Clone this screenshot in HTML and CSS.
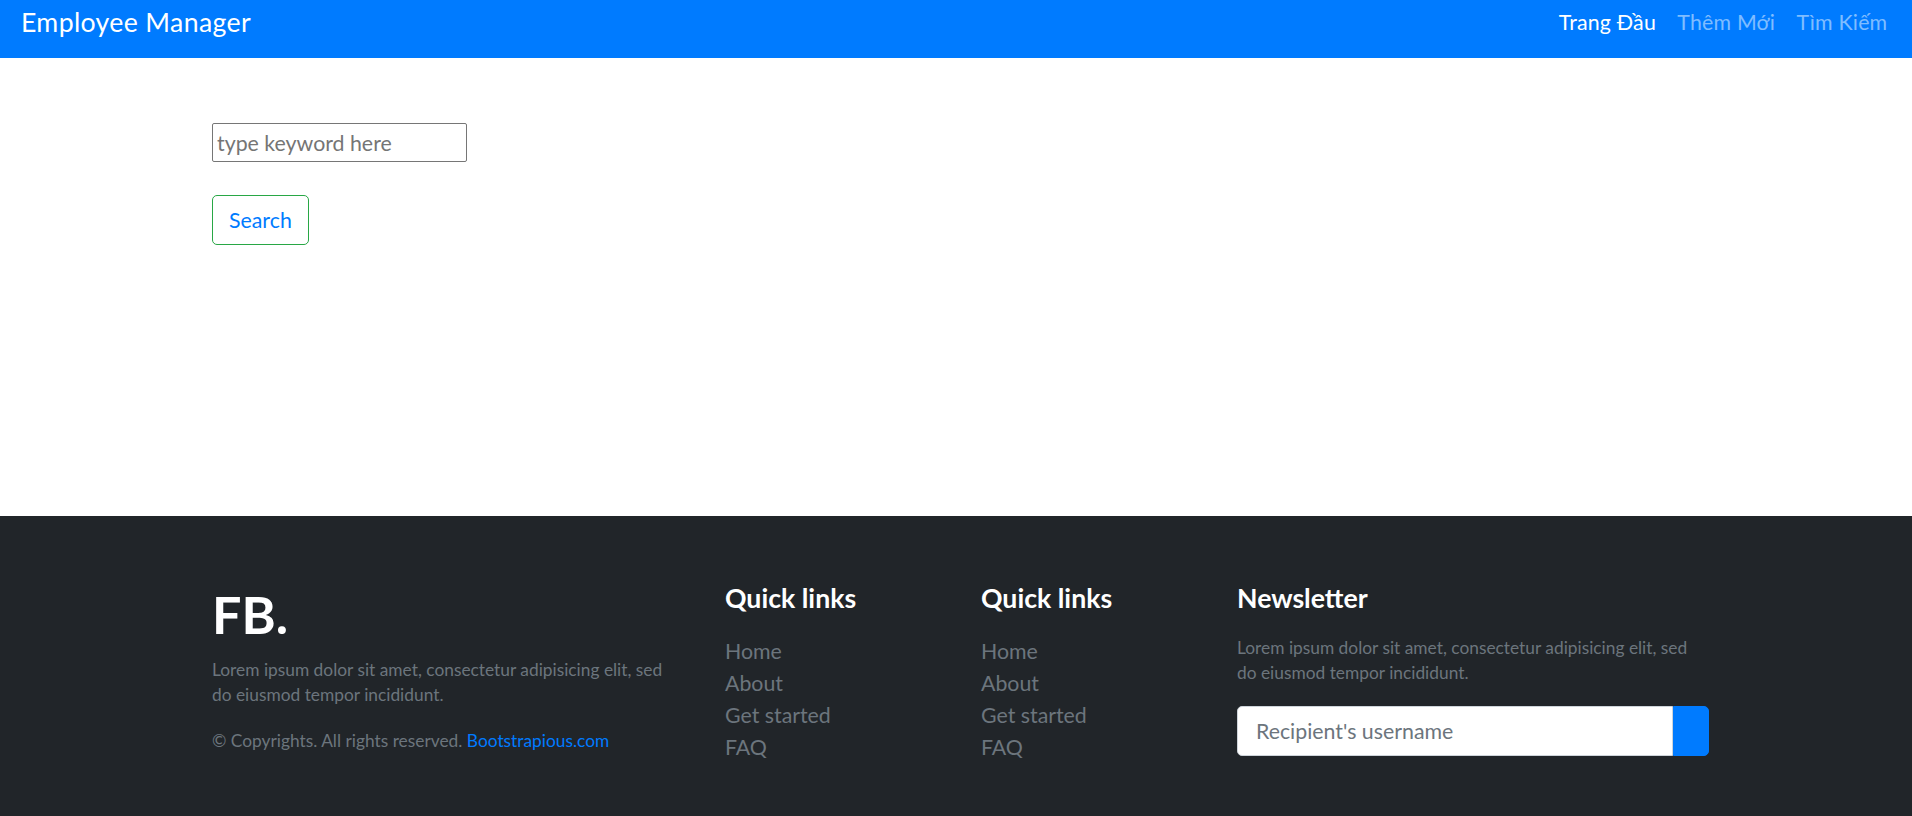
FILE: index.html
```html
<!DOCTYPE html>
<html lang="vi">
<head>
<meta charset="utf-8">
<title>Employee Manager</title>
<link rel="stylesheet" href="styles.css">
</head>
<body>
<nav class="navbar">
  <a class="brand" href="#">Employee Manager</a>
  <ul class="nav">
    <li><a class="nav-link active" href="#">Trang Đầu</a></li>
    <li><a class="nav-link" href="#">Thêm Mới</a></li>
    <li><a class="nav-link" href="#">Tìm Kiếm</a></li>
  </ul>
</nav>

<main class="main">
  <div class="container">
    <form class="search-form">
      <input class="search-input" type="text" placeholder="type keyword here">
      <button class="btn-search" type="button">Search</button>
    </form>
  </div>
</main>

<footer class="footer">
  <div class="container footer-grid">
    <div class="footer-col">
      <h2 class="logo">FB.</h2>
      <p class="muted-text">Lorem ipsum dolor sit amet, consectetur adipisicing elit, sed do eiusmod tempor incididunt.</p>
      <p class="muted-text copy">© Copyrights. All rights reserved. <a href="#" class="copy-link">Bootstrapious.com</a></p>
    </div>
    <div class="footer-col">
      <h5 class="footer-title">Quick links</h5>
      <ul class="footer-links">
        <li><a href="#">Home</a></li>
        <li><a href="#">About</a></li>
        <li><a href="#">Get started</a></li>
        <li><a href="#">FAQ</a></li>
      </ul>
    </div>
    <div class="footer-col">
      <h5 class="footer-title">Quick links</h5>
      <ul class="footer-links">
        <li><a href="#">Home</a></li>
        <li><a href="#">About</a></li>
        <li><a href="#">Get started</a></li>
        <li><a href="#">FAQ</a></li>
      </ul>
    </div>
    <div class="footer-col">
      <h5 class="footer-title">Newsletter</h5>
      <p class="muted-text">Lorem ipsum dolor sit amet, consectetur adipisicing elit, sed do eiusmod tempor incididunt.</p>
      <div class="input-group">
        <input class="newsletter-input" type="text" placeholder="Recipient's username">
        <button class="newsletter-btn" type="button"></button>
      </div>
    </div>
  </div>
</footer>
</body>
</html>
```

FILE: styles.css
```css
* {
  box-sizing: border-box;
}

html, body {
  margin: 0;
  padding: 0;
}

body {
  font-family: "Lato", "Noto Sans", "Liberation Sans", sans-serif;
  font-size: 21.33px;
  line-height: 1.5;
  color: #212529;
  background: #ffffff;
}

a {
  text-decoration: none;
}

/* Navbar */
.navbar {
  height: 58px;
  background: #007bff;
  display: flex;
  align-items: flex-start;
  justify-content: space-between;
  padding: 2px 14px 0 21px;
}

.brand {
  color: #ffffff;
  font-size: 26.67px;
  line-height: 40px;
  letter-spacing: 0.35px;
}

.nav {
  list-style: none;
  margin: 0;
  padding: 0;
  display: flex;
}

.nav-link {
  display: block;
  padding: 4px 10.67px;
  line-height: 32px;
  letter-spacing: 0.2px;
  color: rgba(255, 255, 255, 0.5);
}

.nav-link.active {
  color: #ffffff;
}

/* Container */
.container {
  width: 1506px;
  padding-left: 9px;
  margin: 0 auto;
}

/* Main */
.main {
  height: 458px;
  padding-top: 65px;
}

.search-form {
  display: flex;
  flex-direction: column;
  align-items: flex-start;
  gap: 33px;
}

.search-input {
  width: 255px;
  height: 39px;
  border: 1px solid #767676;
  border-radius: 2px;
  padding: 0 4px;
  font-family: inherit;
  font-size: 21.33px;
  color: #212529;
}

.search-input::placeholder {
  color: #757575;
}

.btn-search {
  height: 50px;
  padding: 0 16px;
  border: 1px solid #28a745;
  border-radius: 5px;
  background: #ffffff;
  color: #007bff;
  font-family: inherit;
  font-size: 21.33px;
  line-height: 32px;
}

/* Footer */
.footer {
  background: #212529;
  padding: 66px 0 64px;
}

.footer-grid {
  display: grid;
  grid-template-columns: 473px 216px 216px 1fr;
  column-gap: 40px;
}

.logo {
  margin: 0 0 10px;
  color: #ffffff;
  font-size: 52px;
  font-weight: 700;
  line-height: 1.25;
}

.muted-text {
  margin: 0 0 21.33px;
  color: #6c757d;
  font-size: 17.33px;
  line-height: 25px;
}

.copy-link {
  color: #007bff;
}

.footer-title {
  margin: 0 0 21px;
  color: #ffffff;
  font-size: 26.67px;
  font-weight: 700;
  line-height: 1.2;
}

.footer-links {
  list-style: none;
  margin: 0;
  padding: 0;
}

.footer-links a {
  display: block;
  color: #6c757d;
  line-height: 32px;
}

.input-group {
  display: flex;
  height: 50px;
}

.newsletter-input {
  flex: 1;
  min-width: 0;
  height: 50px;
  border: 1px solid #ced4da;
  border-radius: 5px 0 0 5px;
  padding: 0 18px;
  font-family: inherit;
  font-size: 21.33px;
  color: #495057;
  background: #ffffff;
}

.newsletter-input::placeholder {
  color: #6c757d;
}

.newsletter-btn {
  width: 36px;
  height: 50px;
  border: 1px solid #007bff;
  border-radius: 0 5px 5px 0;
  background: #007bff;
  padding: 0;
}
```
